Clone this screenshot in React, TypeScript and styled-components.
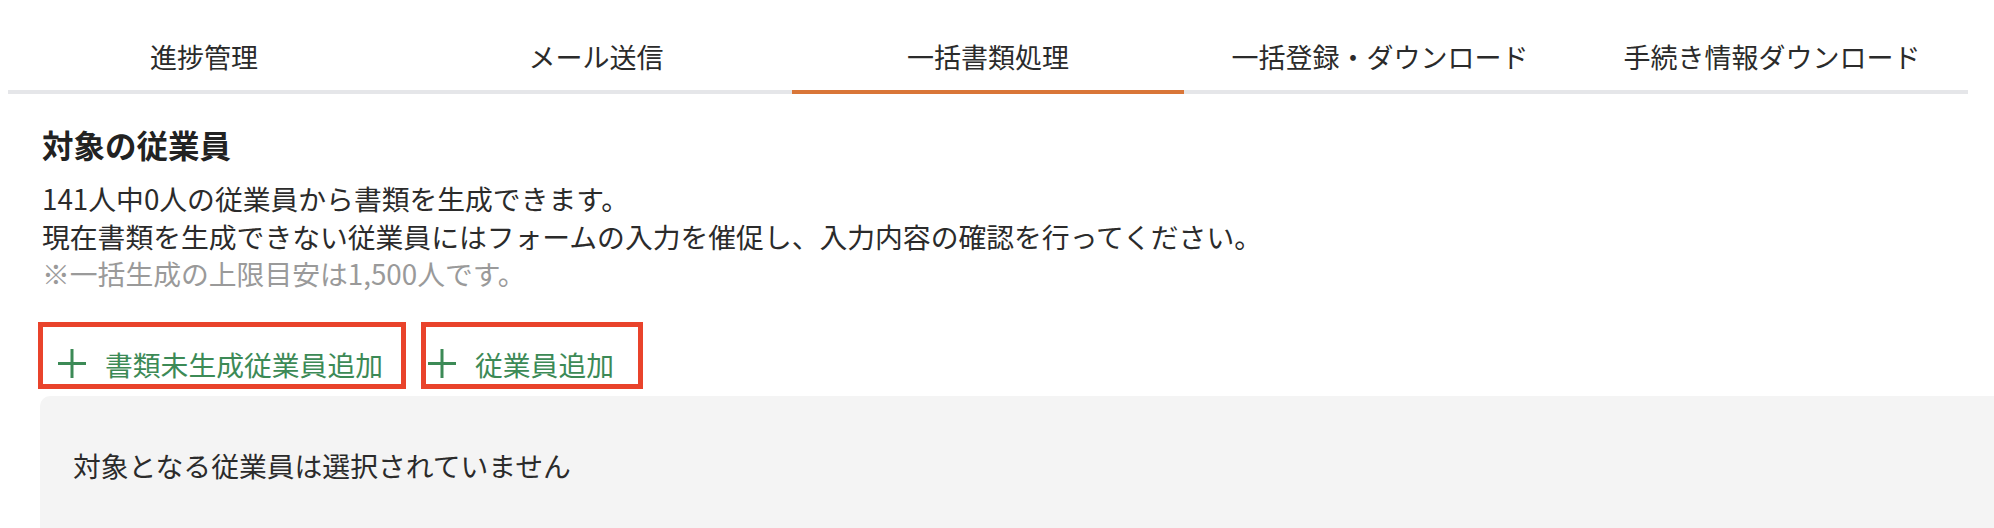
import React from 'react';
import styled, { createGlobalStyle } from 'styled-components';

const GlobalStyle = createGlobalStyle`
 html, body {
   margin: 0;
   padding: 0;
   background: #fff;
   overflow: hidden;
 }
 body {
   font-family: "Noto Sans CJK JP", "Noto Sans", sans-serif;
   color: #333;
 }
`;

const Page = styled.div`
 width: 1994px;
 height: 528px;
 overflow: hidden;
`;

const TabBar = styled.nav`
 display: flex;
 margin: 0 26px 0 8px;
`;

const Tab = styled.div<{ $active?: boolean }>`
 flex: 1;
 text-align: center;
 font-size: 27px;
 line-height: 40px;
 padding: 37px 0 13px;
 color: #2b2b2b;
 border-bottom: 4px solid ${p => (p.$active ? '#d97638' : '#e5e6e9')};
 cursor: pointer;
`;

const Content = styled.section`
 padding-left: 42px;
`;

const Title = styled.h2`
 margin: 28px 0 14px;
 font-size: 31.5px;
 line-height: 44px;
 font-weight: 700;
 color: #222;
`;

const Line = styled.p<{ $muted?: boolean }>`
 margin: 0;
 font-size: 27.8px;
 line-height: 37.5px;
 color: ${p => (p.$muted ? '#9a9a9a' : '#2b2b2b')};
`;

const ButtonRow = styled.div`
 display: flex;
 gap: 15px;
 margin: 29px 0 0 -4px;
`;

const AddButton = styled.button<{ $padLeft: number; $padRight: number }>`
 display: flex;
 align-items: center;
 gap: 18px;
 height: 67px;
 box-sizing: border-box;
 padding: 20px ${p => p.$padRight}px 3px ${p => p.$padLeft}px;
 border: 5px solid #e9432b;
 background: #fff;
 color: #3c8a56;
 font-family: inherit;
 font-size: 27.8px;
 line-height: 34px;
 cursor: pointer;
`;

const PlusIcon = () => (
 <svg width="30" height="31" viewBox="0 0 30 31" fill="none">
   <path d="M15 1v29M1 15.5h28" stroke="#3c8a56" strokeWidth="3" />
 </svg>
);

const EmptyPanel = styled.div`
 margin: 7px -40px 0 -2px;
 padding: 50px 33px;
 min-height: 120px;
 background: #f4f4f4;
 border-radius: 10px 10px 0 0;
 font-size: 27.8px;
 line-height: 38px;
 color: #2b2b2b;
`;

const tabs = ['進捗管理', 'メール送信', '一括書類処理', '一括登録・ダウンロード', '手続き情報ダウンロード'];

const App = () => {
 return (
   <Page>
     <GlobalStyle />
     <TabBar>
       {tabs.map((t, i) => (
         <Tab key={t} $active={i === 2}>{t}</Tab>
       ))}
     </TabBar>
     <Content>
       <Title>対象の従業員</Title>
       <Line>141人中0人の従業員から書類を生成できます。</Line>
       <Line>現在書類を生成できない従業員にはフォームの入力を催促し、入力内容の確認を行ってください。</Line>
       <Line $muted>※一括生成の上限目安は1,500人です。</Line>

       <ButtonRow>
         <AddButton $padLeft={14} $padRight={18}>
           <PlusIcon />
           書類未生成従業員追加
         </AddButton>
         <AddButton $padLeft={1} $padRight={24}>
           <PlusIcon />
           従業員追加
         </AddButton>
       </ButtonRow>

       <EmptyPanel>対象となる従業員は選択されていません</EmptyPanel>
     </Content>
   </Page>
 );
};

export default App;
